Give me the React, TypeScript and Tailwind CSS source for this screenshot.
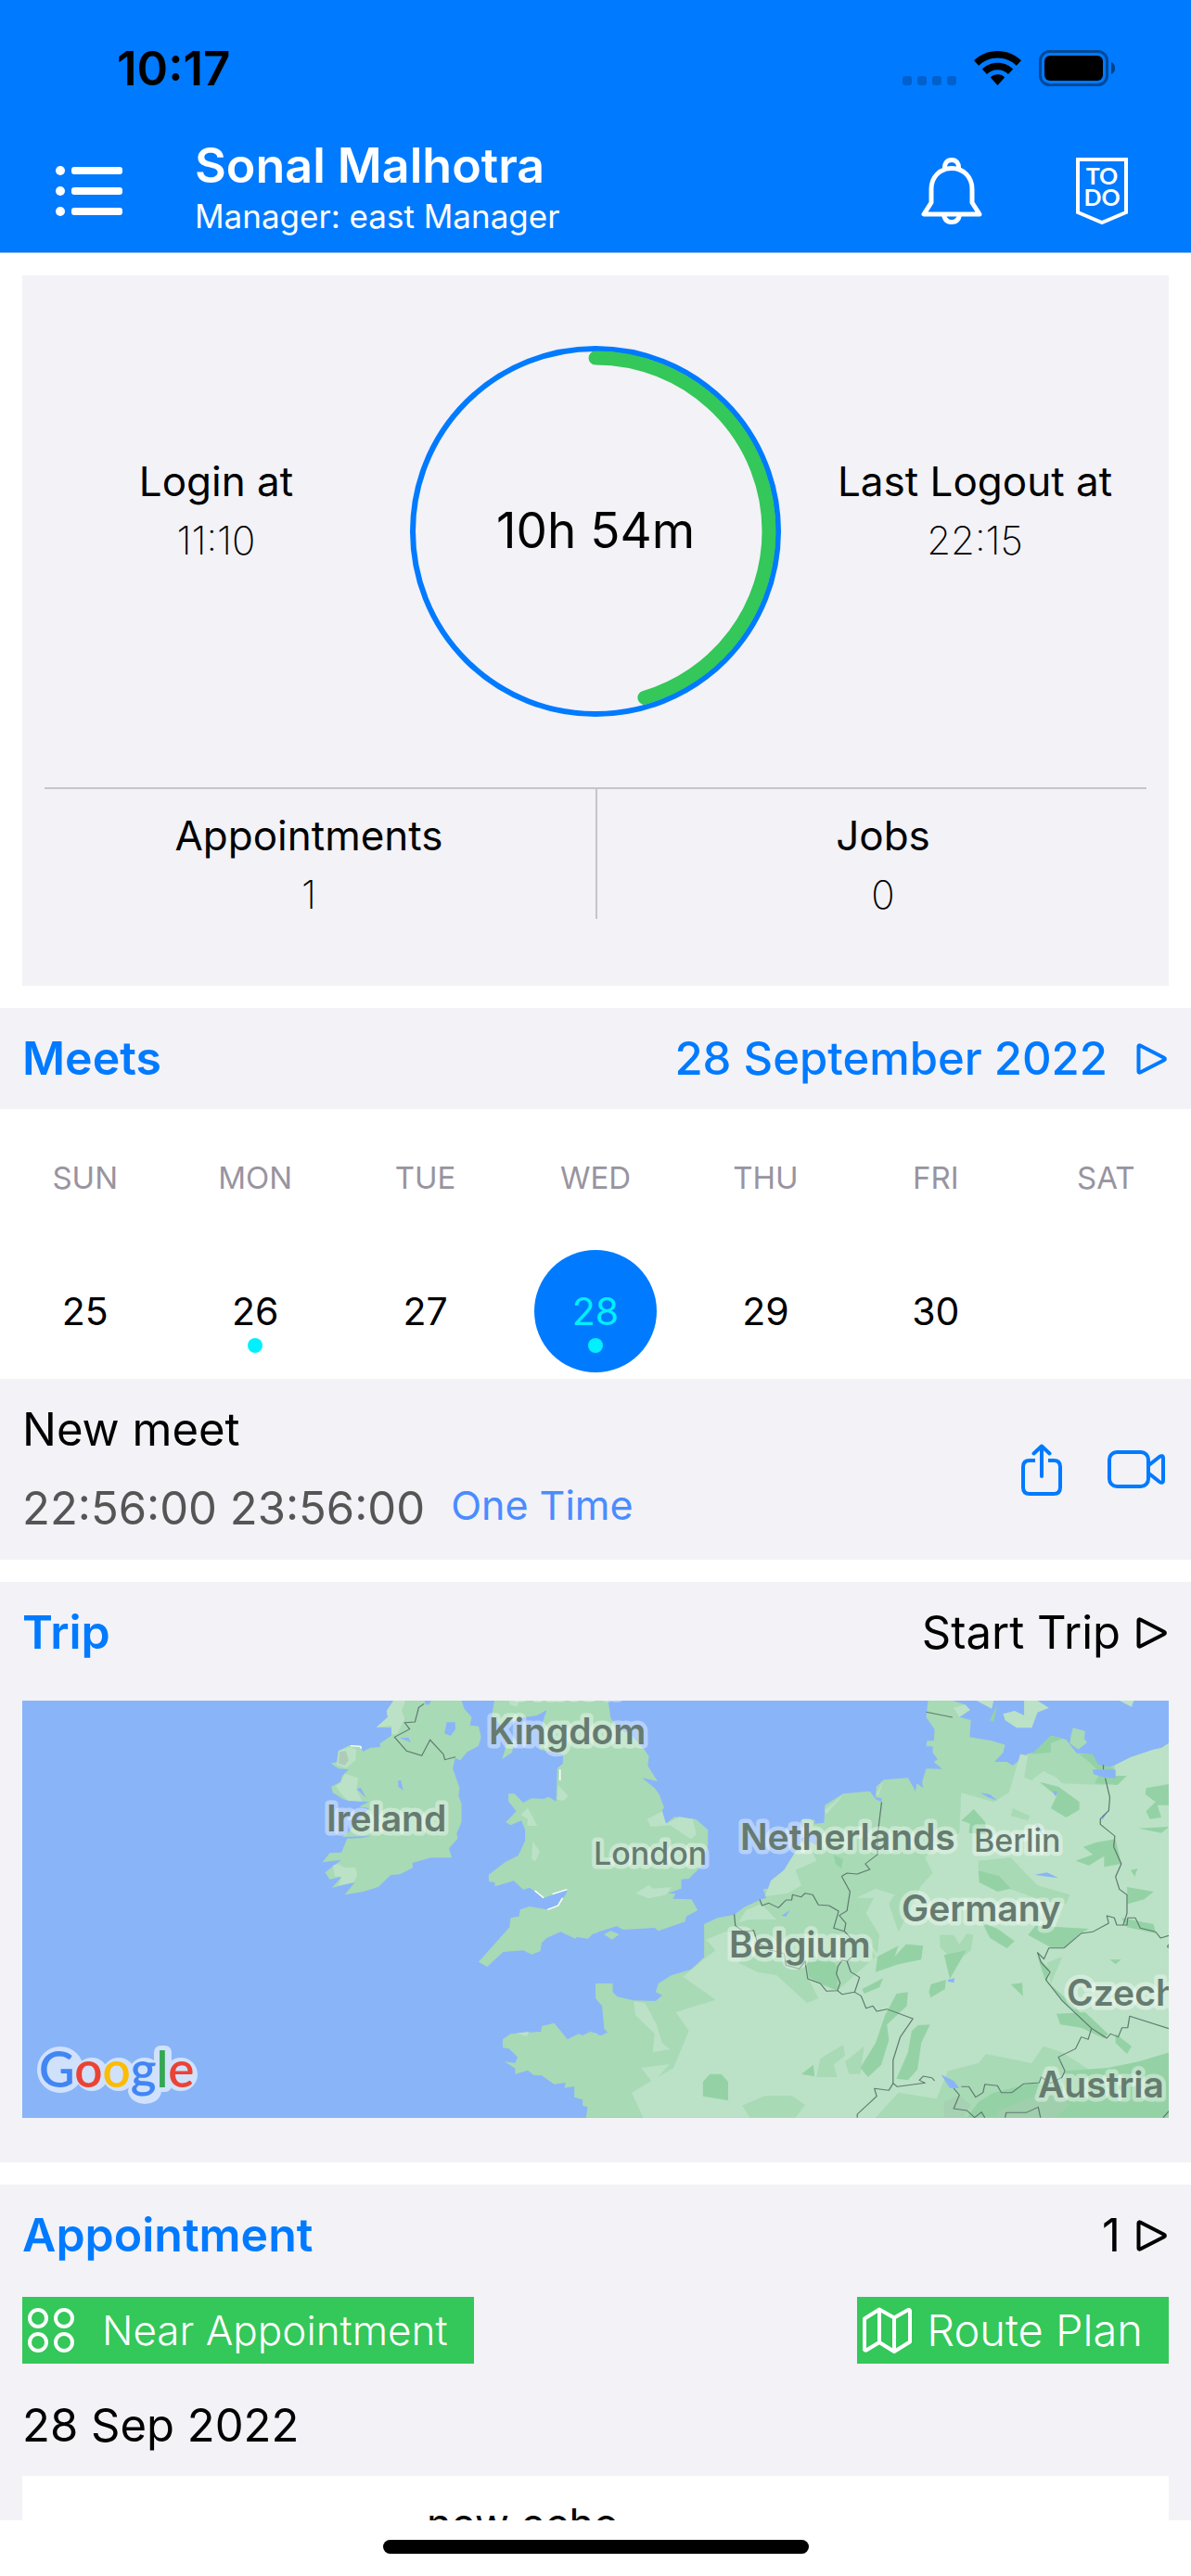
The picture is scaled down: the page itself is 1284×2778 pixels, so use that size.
import React from 'react';

const WEEK = [
  { name: 'SUN', day: 25 },
  { name: 'MON', day: 26, hasMeet: true },
  { name: 'TUE', day: 27 },
  { name: 'WED', day: 28, hasMeet: true, selected: true },
  { name: 'THU', day: 29 },
  { name: 'FRI', day: 30 },
  { name: 'SAT' },
];

// Share of the day spent logged in: 10h 54m of 24h
const WORKED = (10 * 60 + 54) / (24 * 60);

function PlayOutline() {
  return (
    <svg className="h-9 w-9" viewBox="0 0 36 36" fill="none" aria-hidden="true">
      <path
        d="M3.5 4.5v27c0 1 .8 1.4 1.700 1L31 19.300c1.200-.6 1.200-2 0-2.600L5.200 3.500c-.9-.4-1.700 0-1.700 1z"
        stroke="currentColor"
        strokeWidth="4"
        strokeLinejoin="round"
      />
    </svg>
  );
}

function StatusBar() {
  return (
    <div className="flex h-[146px] items-center justify-between pl-[126px] pr-[82px] text-black">
      <span className="text-[51px] font-semibold leading-none">10:17</span>
      <div className="flex items-center gap-[19px]">
        <div className="flex gap-[6px] self-end pb-[1px]">
          <span className="size-[10px] rounded-[3px] bg-black/20" />
          <span className="size-[10px] rounded-[3px] bg-black/20" />
          <span className="size-[10px] rounded-[3px] bg-black/20" />
          <span className="size-[10px] rounded-[3px] bg-black/20" />
        </div>
        <svg className="h-[37px] w-[51px]" viewBox="0 0 51 37" fill="currentColor" aria-label="Wi-Fi">
          <path d="M25.500 0C35.500 0 44.500 3.800 51 10.300l-5.200 5.500C40.700 10.500 33.500 7.400 25.500 7.400S10.300 10.500 5.200 15.800L0 10.300C6.500 3.800 15.500 0 25.500 0z" />
          <path d="M25.500 12.700c6.500 0 12.300 2.500 16.700 6.700L37 24.900c-3-2.900-7-4.700-11.500-4.700S17 22 14 24.900l-5.200-5.500c4.400-4.200 10.200-6.700 16.700-6.700z" />
          <path d="M25.500 25.300c3 0 5.700 1.200 7.700 3.200L25.500 37l-7.700-8.500c2-2 4.700-3.200 7.700-3.200z" />
        </svg>
        <svg className="h-[39px] w-[82px]" viewBox="0 0 82 39" aria-label="Battery">
          <rect x="1.500" y="1.500" width="72" height="36" rx="10" fill="none" stroke="#000" strokeOpacity=".4" strokeWidth="3" />
          <rect x="6" y="6" width="63" height="27" rx="6" />
          <path d="M78 13c3 1.200 4.200 3.800 4.200 6.500S81 24.800 78 26z" fillOpacity=".45" />
        </svg>
      </div>
    </div>
  );
}

function Header() {
  return (
    <header className="shrink-0 border-b border-[#8fb9ea] bg-[#007aff] text-white">
      <StatusBar />
      <div className="flex items-center pb-[9px] pl-[60px] pr-[68px] pt-[3px]">
        <button type="button" aria-label="Menu" className="mr-[78px]">
          <svg className="h-[54px] w-[72px]" viewBox="0 0 72 54" fill="currentColor">
            <circle cx="5" cy="5" r="5" />
            <circle cx="5" cy="27" r="5" />
            <circle cx="5" cy="49" r="5" />
            <rect x="17" y="1" width="55" height="8" rx="3" />
            <rect x="17" y="23" width="55" height="8" rx="3" />
            <rect x="17" y="45" width="55" height="8" rx="3" />
          </svg>
        </button>
        <div className="flex-1 pb-[6px]">
          <h1 className="text-[52px] font-semibold leading-[60px]">Sonal Malhotra</h1>
          <p className="text-[35px] leading-[48px]">Manager: east Manager</p>
        </div>
        <button type="button" aria-label="Notifications" className="mr-[101px]">
          <svg className="h-[72px] w-[66px]" viewBox="0 0 66 72" fill="none" stroke="currentColor" strokeWidth="5" strokeLinecap="round" strokeLinejoin="round">
            <path d="M3 61h60L55 48.500V34C55 21 46 11.500 33 11.500S11 21 11 34v14.500L3 61z" />
            <path d="M25.500 12C25 6 28 2.500 33 2.500S41 6 40.500 12" />
            <path d="M24.500 62c1 5 4 7.500 8.500 7.500s7.500-2.500 8.500-7.500" />
          </svg>
        </button>
        <button type="button" aria-label="To do">
          <svg className="h-[72px] w-[56px]" viewBox="0 0 56 72" fill="none">
            <path d="M2 2h52v57L28 70 2 59V2z" stroke="currentColor" strokeWidth="4" />
            <g fill="currentColor" fontFamily="Lato, sans-serif" fontWeight="700" fontSize="25" textAnchor="middle">
              <text x="28" y="29">TO</text>
              <text x="28" y="52">DO</text>
            </g>
          </svg>
        </button>
      </div>
    </header>
  );
}

function Stat({ label, value }: { label: string; value: string }) {
  return (
    <div className="text-center">
      <p className="text-[44px] leading-[64px]">{label}</p>
      <p className="text-[42px] font-extralight leading-[64px]">{value}</p>
    </div>
  );
}

function WorkRing() {
  const r = 187;
  const length = 2 * Math.PI * r;
  return (
    <div className="relative size-[400px]">
      <svg className="size-full" viewBox="0 0 400 400" fill="none" aria-hidden="true">
        <circle cx="200" cy="200" r="197" stroke="#007aff" strokeWidth="6" />
        <circle
          cx="200"
          cy="200"
          r={r}
          stroke="#34c759"
          strokeWidth="15"
          strokeLinecap="round"
          strokeDasharray={`${length * WORKED} ${length}`}
          transform="rotate(-90 200 200)"
        />
      </svg>
      <p className="absolute inset-0 flex items-center justify-center text-[53px]">10h 54m</p>
    </div>
  );
}

function Summary() {
  return (
    <section className="mx-6 mt-6 bg-[#f2f2f7] pb-[72px]">
      <div className="grid grid-cols-[1fr_400px_1fr] items-center py-[76px]">
        <div className="pb-11">
          <Stat label="Login at" value="11:10" />
        </div>
        <WorkRing />
        <div className="pb-11">
          <Stat label="Last Logout at" value="22:15" />
        </div>
      </div>
      <hr className="mx-6 border-t-2 border-[#c6c6c8]" />
      <div className="grid grid-cols-2">
        <div className="h-[140px] pt-[18px]">
          <Stat label="Appointments" value="1" />
        </div>
        <div className="h-[140px] border-l-2 border-[#c6c6c8] pt-[18px]">
          <Stat label="Jobs" value="0" />
        </div>
      </div>
    </section>
  );
}

function SectionTitle({ title, children }: { title: string; children: React.ReactNode }) {
  return (
    <div className="flex items-center justify-between px-6 py-6 leading-[61px]">
      <h2 className="text-[50px] font-semibold text-[#007aff]">{title}</h2>
      {children}
    </div>
  );
}

function Meets() {
  return (
    <section className="mt-6 bg-[#f2f2f7]">
      <SectionTitle title="Meets">
        <button type="button" className="flex items-center gap-[30px] text-[49px] font-medium text-[#007aff]">
          28 September 2022
          <PlayOutline />
        </button>
      </SectionTitle>

      <div className="grid grid-cols-7 justify-items-center bg-white pb-[7px] pt-[50px]">
        {WEEK.map((d) => (
          <div key={d.name} className="flex flex-col items-center gap-[54px]">
            <span className="text-[33px] leading-[48px] text-[#9894a0]">{d.name}</span>
            {d.day && (
              <button
                type="button"
                className={
                  d.selected
                    ? 'relative size-[132px] rounded-full bg-[#007aff] pt-[2px] text-[41px] text-[#00f0ff]'
                    : 'relative size-[132px] rounded-full pt-[2px] text-[41px]'
                }
              >
                {d.day}
                {d.hasMeet && (
                  <span className="absolute bottom-[21px] left-1/2 size-4 -translate-x-1/2 rounded-full bg-[#00f0ff]" />
                )}
              </button>
            )}
          </div>
        ))}
      </div>

      <div className="flex items-center justify-between px-6 py-[23px]">
        <div>
          <h3 className="text-[49px] leading-[64px]">New meet</h3>
          <div className="mt-[21px] flex items-start gap-7">
            <p className="text-[49px] leading-[64px] text-[#555]">22:56:00 23:56:00</p>
            <p className="text-[43px] leading-[56px] text-[#4a8cff]">One Time</p>
          </div>
        </div>
        <div className="flex items-center gap-[49px] pr-1 text-[#007aff]">
          <button type="button" aria-label="Share">
            <svg className="h-14 w-11" viewBox="0 0 44 56" fill="none" stroke="currentColor" strokeWidth="4" strokeLinecap="round" strokeLinejoin="round">
              <path d="M15 18H9c-4.500 0-7 2.500-7 7v22c0 4.500 2.500 7 7 7h26c4.500 0 7-2.500 7-7V25c0-4.500-2.500-7-7-7h-6" strokeLinecap="butt" />
              <path d="M22 35V2.500M13.500 10.500l8.500-8 8.500 8" />
            </svg>
          </button>
          <button type="button" aria-label="Video call">
            <svg className="h-[42px] w-[62px]" viewBox="0 0 62 42" fill="none" stroke="currentColor" strokeWidth="4" strokeLinejoin="round">
              <rect x="2" y="2" width="42" height="37" rx="8" />
              <path d="M44 16.500L56 7c2-1.500 4-1 4 1.500v24c0 2.500-2 3-4 1.500L44 24.500" />
            </svg>
          </button>
        </div>
      </div>
    </section>
  );
}

function TripMap() {
  return (
    <svg
      className="block h-[450px] w-full"
      viewBox="0 0 1236 450"
      preserveAspectRatio="xMidYMid slice"
      role="img"
      aria-label="Map of north-west Europe"
    >
      <rect width="1236" height="450" fill="#8ab4f8" />

      {/* Ireland, western Britain, Brittany */}
      <g transform="translate(-4 -14) scale(.40816 .33333)">
        <g fill="#a8dab5">
          <path d="M990 42L972 85L985 98L945 128L985 130L985 155L955 180L955 192L928 195L910 207L903 190L875 186L845 205L843 240L825 245L845 262L872 265L855 285L850 305L826 320L830 340L860 362L925 370L900 385L925 390L870 470L855 483L930 480L905 487L868 488L853 533L822 535L803 565L852 557L810 598L822 620L853 612L828 647L888 630L862 670L910 660L950 645L983 606L1008 604L1042 582L1040 567L1090 550L1144 550L1137 520L1160 488L1157 472L1170 435L1170 375L1162 350L1165 325L1147 262L1153 228L1167 235L1185 208L1215 188L1222 160L1215 125L1192 122L1197 95L1178 70L1170 42z" />
          <path d="M1257 42L1250 90L1275 125L1330 97L1370 90L1395 72L1385 110L1375 200L1438 215L1438 245L1423 260L1420 368L1400 353L1387 360L1355 358L1333 372L1310 343L1294 343L1294 368L1315 400L1287 435L1300 445L1328 430L1338 460L1338 495L1320 543L1285 565L1242 605L1242 627L1258 630L1258 643L1308 625L1333 653L1350 647L1387 680L1450 653L1447 665L1425 705L1397 718L1350 708L1325 718L1322 740L1300 745L1297 775L1215 887L1238 903L1280 855L1333 850L1355 863L1378 853L1382 825L1395 810L1432 790L1470 812L1475 807L1505 812L1515 798L1530 792L1530 42z" />
          <path d="M1290 170L1310 175L1303 210L1277 232L1285 200z" />
          <path d="M1530 1391L1499 1391L1503 1357L1490 1352L1490 1333L1468 1325L1468 1290L1442 1295L1445 1278L1415 1283L1382 1255L1360 1253L1345 1238L1312 1250L1312 1232L1284 1210L1312 1215L1318 1195L1295 1168L1279 1165L1279 1138L1300 1120L1380 1113L1382 1095L1415 1085L1450 1138L1480 1120L1490 1125L1510 1113L1530 1120z" />
        </g>
        <g fill="#bbe2c6">
          <path d="M990 42H1022L1012 75L1020 100L1000 150L985 150L985 123L945 128L975 95L972 75z" />
          <path d="M845 205L875 190L892 200L890 235L865 260L840 250z" />
          <path d="M862 278L897 292L893 330L908 368L870 366L850 340L838 318L852 305z" />
          <path d="M830 575L845 570L860 582L890 582L895 605L885 630L845 640L853 612L835 610z" />
          <path d="M1345 388L1370 447L1343 447L1345 425L1327 412z" />
          <path d="M1358 497L1377 530L1365 562L1355 555z" />
          <path d="M1425 315L1452 350L1440 366L1423 362z" />
          <path d="M1295 42H1320L1318 62L1298 55zM1315 1118L1348 1113L1342 1128z" />
        </g>
        <path d="M848 207L865 205L872 235L862 252L845 245z" fill="#aecdb8" />
        <g fill="#8ab4f8">
          <path d="M1131 112L1153 112L1154 135L1141 156L1125 148z" />
          <path d="M1007 162L1030 162L1036 177zM1003 300L1010 300L1016 333L1003 320zM893 328L904 324L918 357z" />
          <path d="M1072 42H1090L1085 55L1075 55z" />
        </g>
        <g fill="none" stroke="#fff" strokeWidth="4">
          <path d="M1364 657L1387 680M1410 668L1449 653M1397 718L1425 705L1437 680" />
          <path d="M877 188L903 190L905 197M1430 265L1430 300" />
        </g>
        <path d="M1071 52L1057 64L1047 111L1020 113L1033 134L993 160L1025 205L1065 220L1087 169L1122 215L1126 233L1154 224" fill="none" stroke="#5f7a70" strokeWidth="3" />
      </g>

      {/* Eastern Britain and the continent */}
      <g transform="translate(616 -14) scale(.41071 .33333)">
        <g fill="#a8dab5">
          <path d="M-8 42L38 42L45 100L70 135L100 155L130 195L145 222L142 253L168 303L127 292L160 325L172 345L185 388L163 432L190 440L212 418L268 425L300 460L300 510L285 575L250 618L230 620L230 650L195 665L215 667L208 683L257 685L273 720L243 740L240 757L170 787L160 777L78 783L60 772L0 795L-8 798z" />
          <path d="M27 798L45 787L67 798L48 815z" />
          <path d="M5 957L50 957L50 985L62 1000L105 1012L163 1014L180 995L163 985L170 957L205 930L255 912L290 872L290 765L325 745L369 735L395 710L440 685L453 680L445 652L475 648L465 625L500 590L530 530L550 490L548 425L580 428L580 440L605 437L607 380L655 343L725 335L740 360L755 370L756 358L740 355L742 320L762 298L825 292L845 335L848 310L865 325L862 305L873 262L915 263L893 240L903 232L890 210L890 190L873 190L875 172L893 172L895 135L873 95L878 42L942 42L975 55L988 72L960 95L990 105L987 160L1045 172L1080 185L1075 210L1052 240L1085 240L1100 252L1140 213L1165 210L1200 155L1240 168L1268 212L1300 215L1315 250L1340 265L1370 250L1410 225L1470 200L1490 195L1510 180L1510 1391L-8 1391L-8 1120L20 1125L37 1115L28 1105L22 1030L5 1005z" />
          <path d="M1258 130L1290 140L1288 165L1295 178L1272 200L1250 180L1253 155z" />
        </g>
        <g fill="#bbe2c6">
          <path d="M235 935L290 878L320 850L295 815L345 790L420 800L450 850L400 850L380 890L430 920L480 930L560 1020L590 1005L565 945L640 980L740 870L700 780L690 680L740 650L790 670L775 700L800 790L830 720L860 640L890 600L870 550L905 500L960 470L965 340L1050 370L1090 340L1120 215L1140 220L1130 290L1150 300L1180 270L1215 290L1230 310L1340 315L1370 250L1410 225L1470 200L1490 195L1510 180L1510 1190L1400 1230L1300 1235L1230 1180L1180 1160L1150 1215L1030 1185L1010 1215L930 1240L900 1330L800 1310L740 1391L130 1391L100 1310L210 1230L250 1110L215 1050L320 1010z" />
          <path d="M105 1015L135 1020L165 1090L180 1150L200 1170L155 1180L160 1120L110 1060z" />
          <path d="M125 1230L200 1218L155 1278z" />
          <path d="M110 665L145 638L155 650L205 645L190 670L145 682z" />
          <path d="M140 425L180 400L190 440L225 418L260 425L270 475L255 490L200 445L150 450z" />
          <path d="M530 530L570 520L585 560L530 590L545 640L510 665L450 675L465 625L500 590z" />
          <path d="M607 395L655 345L640 370L610 410zM742 345L760 300L748 350zM440 700L480 750L410 750L380 760L400 720z" />
          <path d="M945 65L975 55L988 72L960 95zM1075 85L1105 75L1130 90L1130 42H1165L1195 65L1165 80L1150 130L1110 130L1080 105z" />
          <path d="M1005 42H1050L1045 68zM1380 42H1418L1412 62z" />
        </g>
        <g fill="#a8dab5">
          <path d="M1010 560L1095 550L1165 640L1250 670L1240 700L1180 690L1090 650L1010 590z" />
          <path d="M690 680L735 680L715 730L750 800L745 860L720 820L690 770z" />
          <path d="M908 800L945 800L960 830L980 795L997 800L990 850L950 890L910 840z" />
          <path d="M1100 390L1145 415L1140 430L1095 415zM595 1200L655 1155L660 1190L630 1220L640 1260L585 1260z" />
          <path d="M390 1352L450 1320L520 1320L555 1350L530 1391L410 1391z" />
          <path d="M660 1210L710 1160L700 1250L670 1250zM1190 890L1230 870L1200 960z" />
        </g>
        <g fill="#94d2a5">
          <path d="M287 1275L305 1250L335 1250L353 1275L353 1336L287 1322z" />
          <path d="M852 1092L883 1090L860 1150L850 1235L825 1270L795 1265L825 1180L835 1110z" />
          <path d="M795 990L825 985L822 1030L770 1090L775 1140L755 1220L720 1260L700 1230L740 1150L765 1060z" />
          <path d="M1010 592L1065 610L1095 650L1060 660L1012 630z" />
          <path d="M1020 760L1060 780L1105 820L1085 843L1040 810z" />
          <path d="M920 865L978 850L935 943zM885 960L925 945L922 975L885 1003L880 985zM1095 960L1125 955L1127 998z" />
          <path d="M998 393L1028 435L1030 475L985 470L988 440L965 430z" />
          <path d="M1170 305L1220 320L1275 370L1275 395L1240 420L1200 390L1215 350z" />
          <path d="M1450 325L1510 312V380L1480 380L1490 420L1460 425L1450 400L1475 370L1448 345z" />
          <path d="M1285 515L1320 500L1370 490L1385 570L1340 580L1340 545L1300 575L1265 560L1310 540z" />
          <path d="M1400 645L1470 660L1445 685L1402 700zM1385 745L1470 765L1475 795L1400 775zM1430 455L1510 450L1490 470z" />
          <path d="M1200 210L1150 215L1200 155L1230 165L1200 180zM1275 215L1310 215L1325 250L1370 260L1330 285L1400 285L1375 315L1315 310L1330 275L1300 240z" />
          <path d="M1215 1055L1290 1050L1350 1120L1340 1135L1280 1100L1225 1090zM1370 1120L1412 1160L1400 1185L1370 1150z" />
          <path d="M745 870L800 835L790 870L820 830L865 835L860 880L800 895L740 920zM705 975L760 940L750 970L710 990z" />
          <path d="M560 890L620 880L640 900L640 980L600 960L565 935zM545 1250L577 1220L580 1258z" />
          <path d="M1140 800L1160 770L1300 780L1280 795L1235 840L1200 840zM1165 870L1195 910L1190 950L1270 1040L1300 1095L1340 1130L1230 1010L1185 945z" />
          <path d="M1050 1310L1150 1280L1230 1290L1240 1240L1350 1230L1430 1210L1510 1180V1391H980L1010 1340z" />
          <path d="M630 540L655 555L650 585L635 570zM1040 105L1060 55L1050 110zM1410 590L1428 585L1420 612zM1355 880H1385L1370 895z" />
        </g>
        <g fill="#a5cdb1" opacity=".7">
          <path d="M920 1340L960 1320L990 1350L970 1391H920zM1060 1370L1140 1330L1210 1320L1250 1350L1210 1391H1060zM1180 1310L1235 1300L1240 1330L1190 1345z" />
        </g>
        <g fill="#8ab4f8">
          <path d="M1015 340L1040 345L1060 366L1035 355zM1158 605L1190 598L1220 616L1180 610zM1160 438L1175 460L1182 485z" />
          <path d="M912 1252L945 1272L960 1295L935 1295zM515 720L505 740L493 738zM930 945L948 940L945 955L930 950z" />
          <path d="M1310 265L1370 265L1370 293L1340 290L1312 280zM1205 335L1218 335L1212 352zM1335 415L1350 398L1335 430zM555 470L600 470L585 510L555 490z" />
        </g>
        <g fill="none" stroke="#5f7a70" strokeWidth="3" strokeLinejoin="round">
          <path d="M873 79L942 96M756 370L745 480L745 540L713 570L725 588L692 603L665 600L651 610L673 660L665 722L645 737L662 762L658 788L630 778L643 723L618 705L590 703L575 670L555 665L545 677L522 670L520 687L505 687L485 712L460 697L442 705L436 685" />
          <path d="M369 733L372 770L395 790L420 785L430 825L462 848L500 860L505 898L540 910L555 885L562 942L595 957L611 982L640 980L647 955L637 925L642 900L652 882L665 885L687 860L675 810L658 788" />
          <path d="M665 885L675 920L698 937L685 985L652 992L640 980M685 985L702 997L715 1037L733 1030L743 1047L770 1040L838 1071L805 1130L786 1205L786 1280L775 1303L737 1297L743 1322L692 1380V1391" />
          <path d="M786 1280L797 1291L870 1279L855 1270L865 1257L888 1262L895 1272M945 1296L960 1318L945 1362L980 1368L1000 1391L1018 1373L1027 1391M965 1291H985L1003 1325L1022 1310L1027 1283L1060 1288L1070 1310H1098L1128 1282L1170 1278L1175 1260L1200 1280L1230 1260L1237 1240L1220 1195L1265 1168L1280 1130L1298 1138L1307 1102" />
          <path d="M1338 250V265M1343 293L1355 355L1352 398L1330 425V442L1368 480L1365 515L1385 570L1370 612L1380 652L1400 670V730L1390 768L1400 768L1402 745H1422L1435 778L1475 790L1488 810L1510 802" />
          <path d="M1390 768H1373L1367 745L1347 738L1352 762L1310 790L1280 795L1235 842H1195L1182 878L1165 857L1175 890L1198 920L1187 945L1230 1013L1307 1102L1347 1134L1357 1120L1377 1130L1387 1100H1402L1407 1063L1510 1103" />
          <path d="M1080 1391L1083 1375H1135L1167 1357L1173 1391M1495 1391L1510 1370M1510 830L1506 838L1510 842" />
        </g>
      </g>

      <g
        fontFamily="Inter, sans-serif"
        fontWeight="600"
        fontSize="39"
        fill="#667b70"
        stroke="#fff"
        strokeOpacity=".38"
        strokeWidth="9"
        strokeLinejoin="round"
        paintOrder="stroke"
      >
        <text x="522" y="-3">United</text>
        <text x="503" y="47">Kingdom</text>
        <text x="328" y="141">Ireland</text>
        <text x="774" y="161">Netherlands</text>
        <text x="948" y="238">Germany</text>
        <text x="762" y="277">Belgium</text>
        <text x="1126" y="329">Czechia</text>
        <text x="1095" y="428">Austria</text>
        <g fontWeight="500" fontSize="34">
          <text x="616" y="177">London</text>
          <text x="1026" y="163">Berlin</text>
        </g>
      </g>

      {/* Pale outline behind the logo */}
      <g opacity=".6" fill="#fff" stroke="#fff" strokeWidth="14" strokeLinejoin="round">
        <circle cx="41" cy="398" r="18" />
        <circle cx="75" cy="403" r="11" />
        <circle cx="104" cy="403" r="11" />
        <circle cx="132" cy="403" r="11" />
        <path d="M124 410L143 395V420C143 426 137 428 132 428S122 425 121 421z" />
        <path d="M149 379h5v36h-5z" />
        <circle cx="171" cy="403" r="11" />
      </g>
      <text x="18" y="417" fontFamily="Lato, sans-serif" fontWeight="600" fontSize="53">
        <tspan fill="#4285f4">G</tspan>
        <tspan fill="#ea4335">o</tspan>
        <tspan fill="#fbbc05">o</tspan>
        <tspan fill="#4285f4">g</tspan>
        <tspan fill="#34a853">l</tspan>
        <tspan fill="#ea4335">e</tspan>
      </text>
    </svg>
  );
}

function Trip() {
  return (
    <section className="mt-6 bg-[#f2f2f7] pb-12">
      <SectionTitle title="Trip">
        <button type="button" className="flex items-center gap-4 text-[49px]">
          Start Trip
          <PlayOutline />
        </button>
      </SectionTitle>
      <div className="mx-6 mt-[19px]">
        <TripMap />
      </div>
    </section>
  );
}

function Appointment() {
  return (
    <section className="mt-6 bg-[#f2f2f7]">
      <SectionTitle title="Appointment">
        <button type="button" className="flex items-center gap-4 text-[49px]">
          1
          <PlayOutline />
        </button>
      </SectionTitle>
      <div className="mx-6 mt-3 flex justify-between">
        <button type="button" className="flex h-[72px] items-center bg-[#34c759] pl-[6px] pr-7 text-[44px] font-light text-white">
          <svg className="mr-[30px] h-12 w-[50px]" viewBox="0 0 50 48" fill="none" stroke="currentColor" strokeWidth="4" aria-hidden="true">
            <circle cx="11" cy="11" r="9" />
            <circle cx="39" cy="11" r="9" />
            <circle cx="11" cy="37" r="9" />
            <circle cx="39" cy="37" r="9" />
          </svg>
          Near Appointment
        </button>
        <button type="button" className="flex h-[72px] items-center bg-[#34c759] pl-[6px] pr-7 text-[47px] font-light text-white">
          <svg className="mr-4 h-[50px] w-[53px]" viewBox="0 0 53 50" fill="none" stroke="currentColor" strokeWidth="4" strokeLinejoin="round" aria-hidden="true">
            <path d="M2 12.500L18 2.500l16 9L49 3c1-.5 2 0 2 1v33.500L34 48 18 38 4 46.500c-1 .5-2 0-2-1v-33zM18 2.500V38M34 11.500V48" />
          </svg>
          Route Plan
        </button>
      </div>
      <h3 className="mx-6 mb-[22px] mt-[35px] text-[49px] leading-[64px]">28 Sep 2022</h3>
      <article className="mx-6 bg-white pb-5 pl-[436px] pt-5">
        <h4 className="text-[45px] leading-[64px]">new echo</h4>
      </article>
    </section>
  );
}

export default function App() {
  return (
    <div className="flex h-screen flex-col overflow-hidden bg-white font-[Inter,'Liberation_Sans',sans-serif] text-black">
      <Header />
      <main className="min-h-0 flex-1 overflow-y-auto [scrollbar-width:none]">
        <Summary />
        <Meets />
        <Trip />
        <Appointment />
      </main>
      {/* Home indicator */}
      <footer className="flex h-[60px] shrink-0 justify-center pt-[21px]">
        <div className="h-[15px] w-[459px] rounded-full bg-black" />
      </footer>
    </div>
  );
}
